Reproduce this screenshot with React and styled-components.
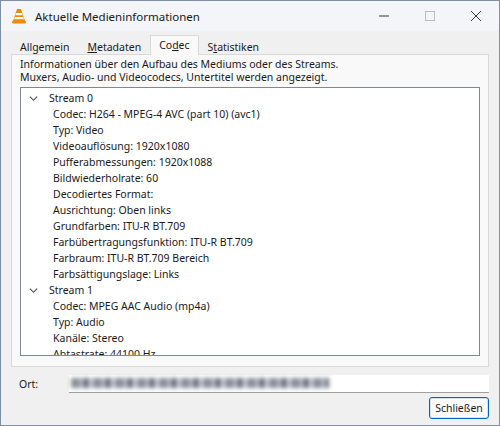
import styled, { createGlobalStyle } from "styled-components"

const Global = createGlobalStyle`
  body { margin: 0; font-family: "Noto Sans", "Open Sans", sans-serif; font-size: 10.5px; color: #1a1a1a; }
`
const Win = styled.div`
  width: 500px; height: 426px; box-sizing: border-box;
  border: 1px solid #7c8fa6; background: #f0f0f0;
  display: flex; flex-direction: column;
`
const TitleBar = styled.div`
  height: 30px; flex: none; display: flex; align-items: center; background: #f3f5f8;
  padding-left: 10px; font-size: 11.5px;
`
const Title = styled.div` flex: 1; margin-left: 8px; `
const Ctrl = styled.div`
  width: 46px; height: 30px; display: flex; align-items: center; justify-content: center; color: #555;
`
const Tabs = styled.div` display: flex; flex: none; padding: 6px 0 0 10px; height: 17px; `
const Tab = styled.div`
  padding: 0 8px; height: ${p => p.$on ? "19px" : "16px"}; margin-top: ${p => p.$on ? "-2px" : "1px"};
  line-height: ${p => p.$on ? "19px" : "16px"};
  border: 1px solid ${p => p.$on ? "#d9d9d9" : "transparent"}; border-bottom: none;
  background: ${p => p.$on ? "#f9f9f9" : "transparent"}; position: relative; z-index: 1;
  u { text-decoration: underline; text-underline-offset: 1px; }
`
const Panel = styled.div`
  margin: 0 10px; border: 1px solid #d9d9d9; background: #f9f9f9; height: 313px; flex: none;
  padding: 3px 8px 10px 8px; box-sizing: border-box; display: flex; flex-direction: column;
`
const Info = styled.div` line-height: 13px; margin-bottom: 3px; `
const Tree = styled.div`
  flex: 1; background: #fff; border: 1px solid #828790; padding: 2px 0 0 0; overflow: hidden;
`
const Row = styled.div`
  height: 16px; max-height: 16px; box-sizing: border-box; line-height: 16px; display: flex; align-items: center;
  padding-left: ${p => p.$child ? "32px" : "8px"}; white-space: nowrap;
`
const Chev = styled.svg` width: 9px; height: 9px; margin-right: 11px; `
const Bottom = styled.div`
  padding: 8px 10px 0 18px; display: flex; flex-direction: column;
`
const OrtRow = styled.div` display: flex; align-items: center; height: 17px; `
const OrtLabel = styled.div` width: 50px; `
const Field = styled.div`
  flex: 1; height: 17px; background: #fff; border-bottom: 1px solid #a0a0a0; display: flex; align-items: center;
`
const Blur = styled.div`
  width: 258px; height: 10px; margin-left: 2px; filter: blur(2px);
  background: repeating-linear-gradient(90deg, #8a8f99 0 9px, #c4c8cf 9px 12px, #6d7380 12px 18px, #d0d3d8 18px 22px);
`
const BtnRow = styled.div` display: flex; justify-content: flex-end; margin-top: 5px; `
const Btn = styled.div`
  width: 58px; height: 20px; border: 1px solid #0067c0; border-radius: 3px; background: #fdfdfd;
  display: flex; align-items: center; justify-content: center;
  box-shadow: inset 0 0 0 1px #cfe3f5;
`

const s0 = ["Codec: H264 - MPEG-4 AVC (part 10) (avc1)", "Typ: Video", "Videoauflösung: 1920x1080", "Pufferabmessungen: 1920x1088", "Bildwiederholrate: 60", "Decodiertes Format:", "Ausrichtung: Oben links", "Grundfarben: ITU-R BT.709", "Farbübertragungsfunktion: ITU-R BT.709", "Farbraum: ITU-R BT.709 Bereich", "Farbsättigungslage: Links"]
const s1 = ["Codec: MPEG AAC Audio (mp4a)", "Typ: Audio", "Kanäle: Stereo", "Abtastrate: 44100 Hz", "Bits pro Sample: 32"]

const Stream = ({ name, items }) => (
  <>
    <Row>
      <Chev viewBox="0 0 10 10"><path d="M1 3l4 4 4-4" fill="none" stroke="#444" strokeWidth="1.2" /></Chev>
      {name}
    </Row>
    {items.map(t => <Row $child key={t}>{t}</Row>)}
  </>
)

export default function App() {
  return (
    <Win>
      <Global />
      <TitleBar>
        <svg width="16" height="16" viewBox="0 0 16 16">
          <path d="M6 1h4l4 12H2z" fill="#f08a00" />
          <path d="M5 5h6l.7 2.2H4.3zM3.8 9h8.4l.7 2.3H3.1z" fill="#fff" />
          <rect x="1" y="13" width="14" height="2.5" rx="1" fill="#f08a00" />
        </svg>
        <Title>Aktuelle Medieninformationen</Title>
        <Ctrl><svg width="10" height="10"><path d="M0 5h10" stroke="#333" /></svg></Ctrl>
        <Ctrl><svg width="10" height="10"><rect x=".5" y=".5" width="9" height="9" fill="none" stroke="#bbb" /></svg></Ctrl>
        <Ctrl><svg width="10" height="10"><path d="M0 0l10 10M10 0L0 10" stroke="#333" /></svg></Ctrl>
      </TitleBar>
      <Tabs>
        <Tab>Allgemein</Tab>
        <Tab><u>M</u>etadaten</Tab>
        <Tab $on>Co<u>d</u>ec</Tab>
        <Tab>S<u>t</u>atistiken</Tab>
      </Tabs>
      <Panel>
        <Info>Informationen über den Aufbau des Mediums oder des Streams.<br />Muxers, Audio- und Videocodecs, Untertitel werden angezeigt.</Info>
        <Tree>
          <Stream name="Stream 0" items={s0} />
          <Stream name="Stream 1" items={s1} />
        </Tree>
      </Panel>
      <Bottom>
        <OrtRow><OrtLabel>Ort:</OrtLabel><Field><Blur /></Field></OrtRow>
        <BtnRow><Btn>Schließen</Btn></BtnRow>
      </Bottom>
    </Win>
  )
}
